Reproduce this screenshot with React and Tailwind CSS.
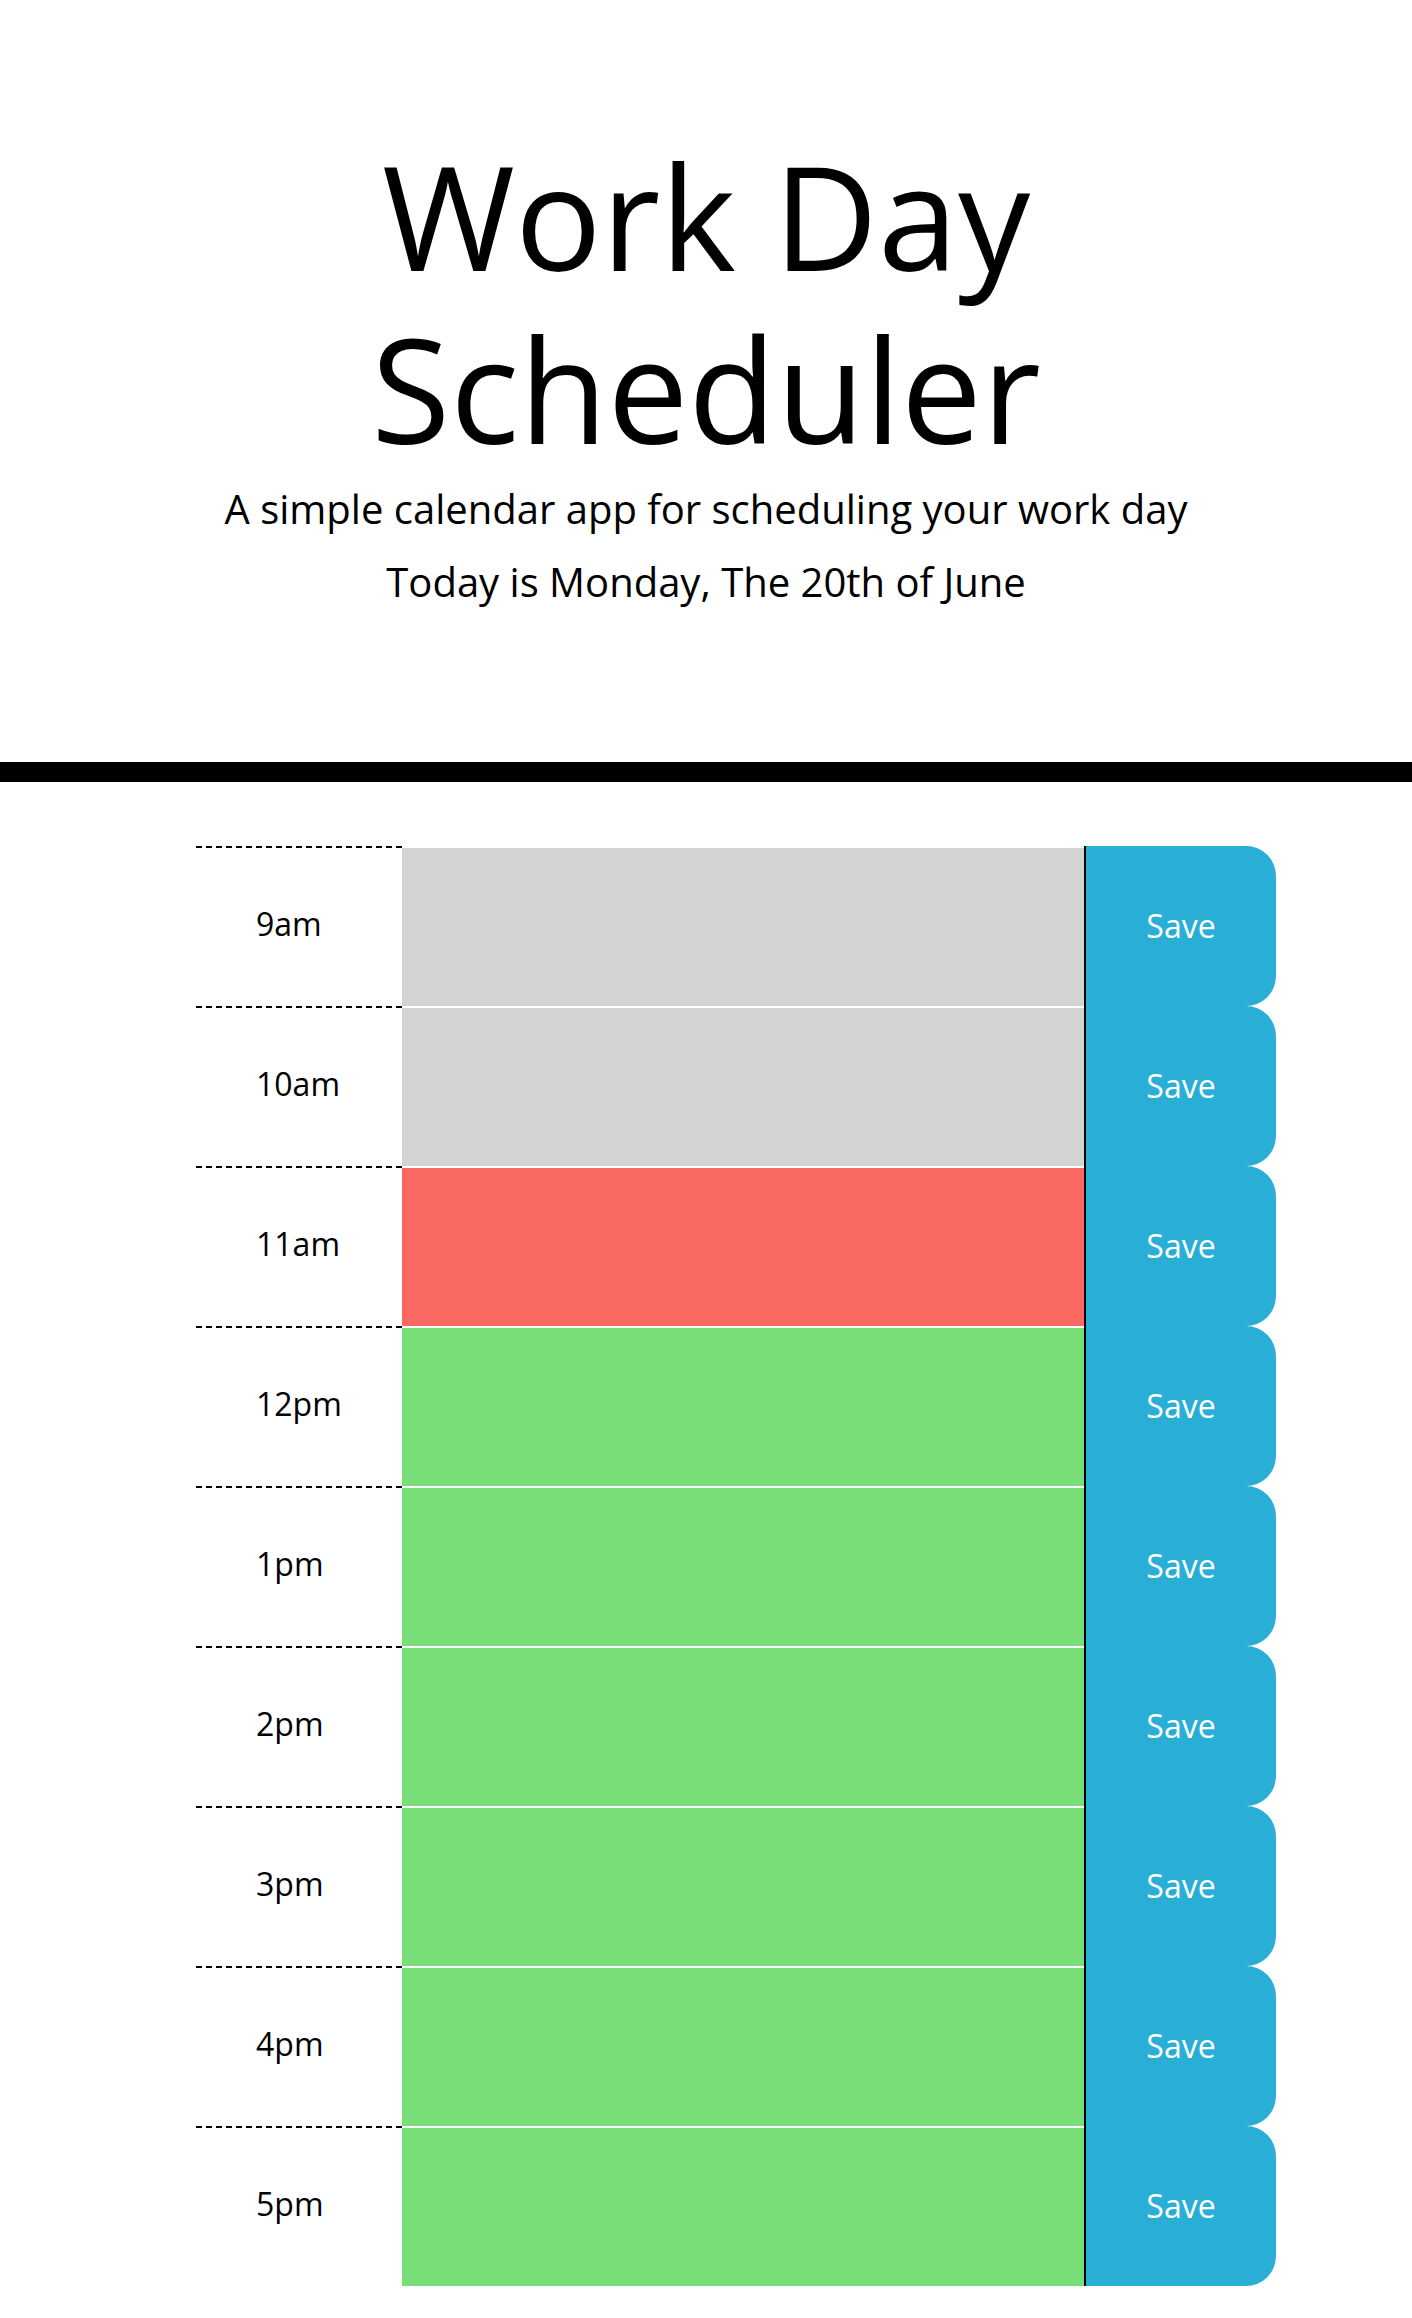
import React from "react";

const rows = [
  ["9am", "past"],
  ["10am", "past"],
  ["11am", "present"],
  ["12pm", "future"],
  ["1pm", "future"],
  ["2pm", "future"],
  ["3pm", "future"],
  ["4pm", "future"],
  ["5pm", "future"],
];

const bg = {
  past: "bg-[#d3d3d3]",
  present: "bg-[#f96861]",
  future: "bg-[#78de78]",
};

export default function App() {
  return (
    <div className="min-h-[2318px] bg-white text-black font-['Open_Sans',sans-serif]">
      <header className="border-b-[20px] border-black text-center pt-[129px] pb-[150px]">
        <h1 className="text-[144px] leading-[1.2] font-normal">
          Work Day
          <br />
          Scheduler
        </h1>
        <p className="mt-[4px] text-[40px] leading-[60px] font-normal">
          A simple calendar app for scheduling your work day
        </p>
        <p className="mt-[13px] text-[40px] leading-[60px] font-normal">
          Today is Monday, The 20th of June
        </p>
      </header>
      <main className="ml-[196px] w-[1080px] mt-[64px] pb-[32px]">
        {rows.map(([label, state]) => (
          <div key={label} className="flex h-[160px]">
            <div className="w-[206px] shrink-0 border-t-2 border-dashed border-black pl-[60px] pt-[52px] text-[32px] leading-[48px]">
              {label}
            </div>
            <textarea
              className={`flex-1 min-w-0 resize-none border-t-2 border-white p-[20px] outline-none ${bg[state]}`}
            />
            <button className="w-[192px] shrink-0 border-l-2 border-black rounded-r-[30px] bg-[#29afd6] text-white text-[32px] leading-[48px] flex items-center justify-center">
              Save
            </button>
          </div>
        ))}
      </main>
    </div>
  );
}
